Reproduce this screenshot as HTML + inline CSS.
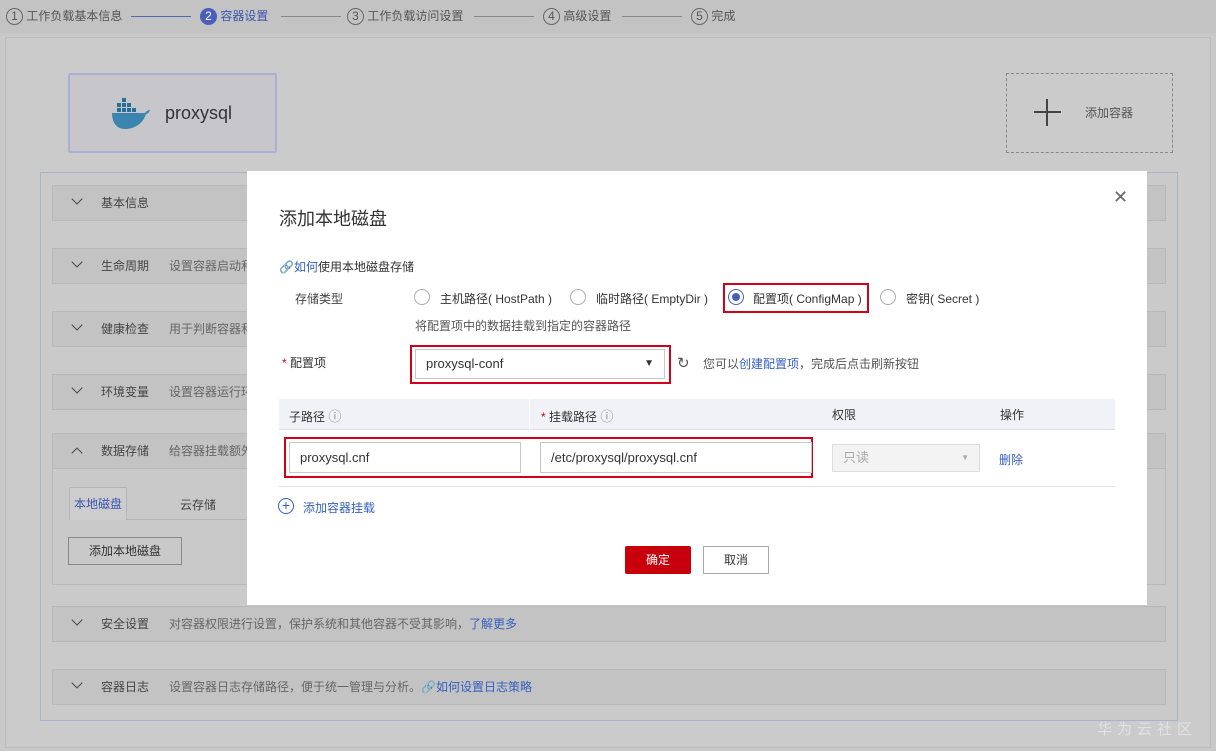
<!DOCTYPE html>
<html><head><meta charset="utf-8"><style>
*{box-sizing:border-box;margin:0;padding:0}
body{width:1216px;height:751px;overflow:hidden;background:#c9c9c9;font-family:"Liberation Sans","Noto Sans CJK SC",sans-serif;font-size:12px;color:#333;position:relative}
.a{position:absolute}
.steps{left:0;top:0;width:1216px;height:33px;background:#c3c3c3;color:#555;font-size:12px}
.circ{display:inline-block;width:17px;height:17px;border:1px solid #666;border-radius:50%;text-align:center;line-height:15px;font-size:12px}
.main{left:5px;top:37px;width:1206px;height:711px;background:#cbcbcb;border:1px solid #bdbdbd}
.row{position:absolute;left:52px;width:1114px;height:36px;background:#c3c3c3;border:1px solid #b8b8b8;line-height:34px;color:#444}
.row .t{position:absolute;left:48px}
.row .d{position:absolute;left:116px;color:#666}
.chev{position:absolute;left:20px;top:9px;width:8px;height:8px;border-right:1.5px solid #444;border-bottom:1.5px solid #444;transform:rotate(45deg)}
.red{border:2px solid #d0021b;position:absolute}
.inp{position:absolute;border:1px solid #c8c8c8;background:#fff;height:32px;line-height:30px;padding-left:10px;font-size:13px;color:#333}
.radio{position:absolute;width:16px;height:16px;border:1px solid #aaa;border-radius:50%}
.lnk{color:#3660c0}
</style></head><body>
<div class="a steps">
 <div class="a" style="left:6px;top:7px"><span class="circ">1</span> 工作负载基本信息</div>
 <div class="a" style="left:131px;top:16px;width:60px;border-top:1px solid #5068b0"></div>
 <div class="a" style="left:200px;top:7px;color:#3d55b0"><span class="circ" style="background:#4a5fbd;color:#fff;border-color:#4a5fbd">2</span> 容器设置</div>
 <div class="a" style="left:281px;top:16px;width:60px;border-top:1px solid #888"></div>
 <div class="a" style="left:347px;top:7px"><span class="circ">3</span> 工作负载访问设置</div>
 <div class="a" style="left:474px;top:16px;width:60px;border-top:1px solid #888"></div>
 <div class="a" style="left:543px;top:7px"><span class="circ">4</span> 高级设置</div>
 <div class="a" style="left:622px;top:16px;width:60px;border-top:1px solid #888"></div>
 <div class="a" style="left:691px;top:7px"><span class="circ">5</span> 完成</div>
</div>
<div class="a main"></div>
<div class="a" style="left:68px;top:73px;width:209px;height:80px;background:#c7c7cb;border:2px solid #a9b0d2;border-radius:2px"></div>
<svg class="a" style="left:110px;top:97px" width="42" height="34" viewBox="0 0 42 34"><rect x="12" y="1" width="4" height="4" fill="#2a6f9a"/><rect x="7" y="6" width="4" height="4" fill="#2a6f9a"/><rect x="12" y="6" width="4" height="4" fill="#2a6f9a"/><rect x="17" y="6" width="4" height="4" fill="#2a6f9a"/><rect x="7" y="11" width="4" height="4" fill="#2a6f9a"/><rect x="12" y="11" width="4" height="4" fill="#2a6f9a"/><rect x="17" y="11" width="4" height="4" fill="#2a6f9a"/><rect x="22" y="11" width="4" height="4" fill="#2a6f9a"/><path d="M2 16h33c2-3 5-3 5-3-1 3-3 4-4 4-3 10-12 15-21 15C7 32 2 26 2 16z" fill="#3b84b0"/></svg>
<div class="a" style="left:165px;top:103px;font-size:18px;color:#333">proxysql</div>
<div class="a" style="left:1006px;top:73px;width:167px;height:80px;border:1px dashed #888"></div>
<div class="a" style="left:1034px;top:111px;width:27px;height:2px;background:#444"></div>
<div class="a" style="left:1046px;top:99px;width:2px;height:27px;background:#444"></div>
<div class="a" style="left:1085px;top:104px;color:#555">添加容器</div>
<div class="a" style="left:40px;top:172px;width:1138px;height:549px;border:1px solid #a9b0d0;background:#cacaca"></div>
<div class="row" style="top:185px"><i class="chev"></i><span class="t">基本信息</span></div>
<div class="row" style="top:248px"><i class="chev"></i><span class="t">生命周期</span><span class="d">设置容器启动和</span></div>
<div class="row" style="top:311px"><i class="chev"></i><span class="t">健康检查</span><span class="d">用于判断容器和</span></div>
<div class="row" style="top:374px"><i class="chev"></i><span class="t">环境变量</span><span class="d">设置容器运行环</span></div>
<div class="a" style="left:52px;top:433px;width:1114px;height:152px;border:1px solid #b8b8b8;background:#c9c9c9"></div>
<div class="row" style="top:433px"><i class="chev" style="transform:rotate(225deg);top:15px"></i><span class="t">数据存储</span><span class="d">给容器挂载额外</span></div>
<div class="a" style="left:69px;top:487px;width:58px;height:33px;background:#cdcdcd;border:1px solid #b5b5b5;border-bottom:none;color:#3d55b0;line-height:32px;text-align:center">本地磁盘</div>
<div class="a" style="left:127px;top:519px;width:120px;border-top:1px solid #b5b5b5"></div>
<div class="a" style="left:180px;top:496px;color:#444">云存储</div>
<div class="a" style="left:68px;top:537px;width:114px;height:28px;border:1px solid #888;text-align:center;line-height:26px;color:#333">添加本地磁盘</div>
<div class="row" style="top:606px"><i class="chev"></i><span class="t">安全设置</span><span class="d">对容器权限进行设置，保护系统和其他容器不受其影响，<span class="lnk">了解更多</span></span></div>
<div class="row" style="top:669px"><i class="chev"></i><span class="t">容器日志</span><span class="d">设置容器日志存储路径，便于统一管理与分析。<span class="lnk">🔗如何设置日志策略</span></span></div>
<div class="a" style="left:1097px;top:718px;color:#e2e2e2;font-size:15px;letter-spacing:5px">华为云社区</div>

<div class="a" style="left:247px;top:171px;width:900px;height:434px;background:#fff"></div>
<div class="a" style="left:1113px;top:187px;font-size:18px;color:#666">✕</div>
<div class="a" style="left:279px;top:205px;font-size:18px;color:#333">添加本地磁盘</div>
<div class="a" style="left:279px;top:258px"><span class="lnk">🔗如何</span>使用本地磁盘存储</div>
<div class="a" style="left:295px;top:290px;color:#444">存储类型</div>
<div class="radio" style="left:414px;top:289px"></div><div class="a" style="left:440px;top:290px">主机路径( HostPath )</div>
<div class="radio" style="left:570px;top:289px"></div><div class="a" style="left:596px;top:290px">临时路径( EmptyDir )</div>
<div class="red" style="left:723px;top:283px;width:146px;height:30px"></div>
<div class="radio" style="left:728px;top:289px;border-color:#4a5fbd"><div class="a" style="left:3px;top:3px;width:8px;height:8px;border-radius:50%;background:#4a5fbd"></div></div><div class="a" style="left:753px;top:290px">配置项( ConfigMap )</div>
<div class="radio" style="left:880px;top:289px"></div><div class="a" style="left:906px;top:290px">密钥( Secret )</div>
<div class="a" style="left:415px;top:317px;color:#555">将配置项中的数据挂载到指定的容器路径</div>
<div class="a" style="left:282px;top:354px"><span style="color:#d0021b">*</span> 配置项</div>
<div class="red" style="left:410px;top:345px;width:261px;height:39px"></div>
<div class="inp" style="left:415px;top:349px;width:250px;height:30px;line-height:28px">proxysql-conf<span style="position:absolute;right:10px;font-size:10px">▼</span></div>
<div class="a" style="left:677px;top:354px;font-size:15px;color:#555">↻</div>
<div class="a" style="left:703px;top:355px;color:#555">您可以<span class="lnk">创建配置项</span>，完成后点击刷新按钮</div>
<div class="a" style="left:279px;top:399px;width:836px;height:31px;background:#f0f2f8;border-bottom:1px solid #dde"></div>
<div class="a" style="left:529px;top:399px;height:31px;border-left:1px solid #fff"></div>
<div class="a" style="left:289px;top:406px">子路径 <span style="color:#888;font-size:13px">ⓘ</span></div>
<div class="a" style="left:541px;top:406px"><span style="color:#d0021b">*</span> 挂载路径 <span style="color:#888;font-size:13px">ⓘ</span></div>
<div class="a" style="left:832px;top:406px">权限</div>
<div class="a" style="left:1000px;top:406px">操作</div>
<div class="red" style="left:284px;top:437px;width:529px;height:41px"></div>
<div class="inp" style="left:289px;top:442px;width:232px;height:31px">proxysql.cnf</div>
<div class="inp" style="left:540px;top:442px;width:272px;height:31px">/etc/proxysql/proxysql.cnf</div>
<div class="inp" style="left:832px;top:444px;width:148px;height:28px;line-height:26px;background:#f3f3f3;color:#aaa;border-color:#ddd">只读<span style="position:absolute;right:10px;font-size:8px">▼</span></div>
<div class="a lnk" style="left:999px;top:451px">删除</div>
<div class="a" style="left:279px;top:486px;width:836px;border-top:1px solid #e0e0e0"></div>
<div class="a" style="left:278px;top:498px;width:16px;height:16px;border:1px solid #3660c0;border-radius:50%;color:#3660c0;text-align:center;line-height:13px;font-size:14px">+</div>
<div class="a lnk" style="left:303px;top:499px">添加容器挂载</div>
<div class="a" style="left:625px;top:546px;width:66px;height:28px;background:#c7000b;color:#fff;text-align:center;line-height:28px;border-radius:2px">确定</div>
<div class="a" style="left:703px;top:546px;width:66px;height:28px;border:1px solid #aaa;text-align:center;line-height:26px">取消</div>
</body></html>
